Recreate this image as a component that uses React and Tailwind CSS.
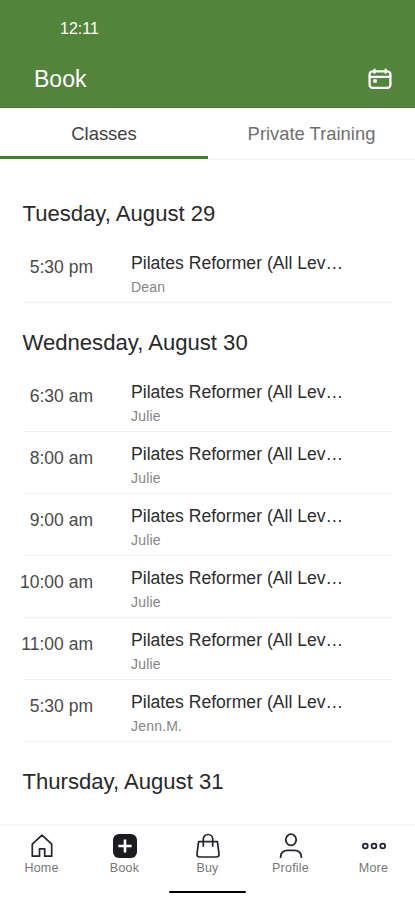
const days = [
  { date: "Tuesday, August 29", classes: [["5:30 pm", "Dean"]] },
  {
    date: "Wednesday, August 30",
    classes: [
      ["6:30 am", "Julie"],
      ["8:00 am", "Julie"],
      ["9:00 am", "Julie"],
      ["10:00 am", "Julie"],
      ["11:00 am", "Julie"],
      ["5:30 pm", "Jenn.M."],
    ],
  },
  { date: "Thursday, August 31", classes: [["", ""]] },
];

function CalendarIcon() {
  return (
    <svg width="26" height="26" viewBox="0 0 26 26" fill="none" stroke="#fff" strokeWidth="2.3" strokeLinecap="round">
      <rect x="2.6" y="5.4" width="20.8" height="16.4" rx="3" />
      <path d="M2.6 10.8h20.8M7.5 3.6v3.2M18.6 3.6v3.2" />
      <rect x="6.2" y="13.2" width="3.6" height="3.6" rx="0.6" fill="#fff" stroke="none" />
    </svg>
  );
}

function HomeIcon() {
  return (
    <svg width="26" height="26" viewBox="0 0 26 26" fill="none" stroke="#25242f" strokeWidth="1.7" strokeLinejoin="round">
      <path d="M3.3 11.2 13 2.2l9.7 9v12h-7v-7.4h-5.2v7.4H3.3z" />
    </svg>
  );
}

function BookIcon() {
  return (
    <svg width="26" height="26" viewBox="0 0 26 26">
      <rect x="1" y="1" width="24" height="24" rx="6" fill="#1c1b20" />
      <path d="M13 6.4v13.2M6.4 13h13.2" stroke="#fff" strokeWidth="2.6" />
    </svg>
  );
}

function BuyIcon() {
  return (
    <svg width="26" height="26" viewBox="0 0 26 26" fill="none" stroke="#25242f" strokeWidth="1.7" strokeLinecap="round" strokeLinejoin="round">
      <path d="M3.6 8.6h18.8l1.6 12.2c.3 2-.8 3.2-2.6 3.2H4.6C2.8 24 1.7 22.8 2 20.8z" />
      <path d="M8.3 13V6.2a4.7 4.7 0 0 1 9.4 0V13" />
    </svg>
  );
}

function ProfileIcon() {
  return (
    <svg width="26" height="26" viewBox="0 0 26 26" fill="none" stroke="#25242f" strokeWidth="1.8" strokeLinecap="round">
      <ellipse cx="13" cy="6.8" rx="5.2" ry="5.6" />
      <path d="M2.6 24.2c.2-4.4 3-6.8 7.2-6.8h6.4c4.2 0 7 2.4 7.2 6.8" />
    </svg>
  );
}

function MoreIcon() {
  return (
    <svg width="26" height="26" viewBox="0 0 26 26" fill="none" stroke="#25242f" strokeWidth="1.8">
      <circle cx="4.3" cy="13" r="2.4" />
      <circle cx="13" cy="13" r="2.4" />
      <circle cx="21.7" cy="13" r="2.4" />
    </svg>
  );
}

const nav = [
  ["Home", HomeIcon],
  ["Book", BookIcon],
  ["Buy", BuyIcon],
  ["Profile", ProfileIcon],
  ["More", MoreIcon],
];

function ClassRow({ time, teacher }) {
  return (
    <div className="flex h-[62px] shrink-0">
      <div className="w-[93px] pt-[14px] text-right text-[17.5px] leading-6 text-[#4a4a4a]">{time}</div>
      <div className="ml-[38px] mr-[23px] flex-1">
        <div className="pt-[10px] text-[17.6px] leading-6 text-[#2d2d2d] whitespace-nowrap">Pilates Reformer (All Lev…</div>
        <div className="pt-px text-[14px] leading-[22px] tracking-[0.2px] text-[#858585]">{teacher}</div>
      </div>
    </div>
  );
}

export default function App() {
  return (
    <div className="flex h-[900px] w-[415px] flex-col overflow-hidden bg-white font-['Liberation_Sans',Arial,sans-serif]">
      <header className="h-[108px] shrink-0 border-b border-[#467a25] bg-[#53843c] text-white">
        <div className="pl-[60px] pt-[19px] text-[16px] leading-5">12:11</div>
        <div className="mt-[25px] flex h-[30px] items-center justify-between pl-[34px] pr-[22px]">
          <h1 className="text-[23px] leading-[30px]">Book</h1>
          <CalendarIcon />
        </div>
      </header>
      <div className="flex h-[52px] shrink-0 text-center text-[18.4px] leading-[52px]">
        <div className="h-[51px] w-[208px] border-b-[3px] border-[#417f2a] text-[#414141]">Classes</div>
        <div className="flex-1 border-b border-[#f3f3f3] text-[#707070]">Private Training</div>
      </div>
      <main className="flex min-h-0 flex-1 flex-col overflow-hidden pt-[14px]">
        {days.map((day) => (
          <section key={day.date} className="group shrink-0">
            <h2 className="h-[67px] pl-[22.5px] pt-[26px] text-[22.1px] leading-[28px] text-[#292929]">{day.date}</h2>
            {day.classes.map(([time, teacher]) => (
              <div key={time}>
                <ClassRow time={time} teacher={teacher} />
                <div className="-mt-px ml-[24px] mr-[23px] h-px bg-[#f2f2f2]" />
              </div>
            ))}
          </section>
        ))}
      </main>
      <nav className="h-[76px] shrink-0 border-t-2 border-[#f8f8f8] bg-white">
        <div className="grid grid-cols-5 pt-[7px]">
          {nav.map(([label, Icon]) => (
            <div key={label} className="flex flex-col items-center">
              <Icon />
              <span className="text-[12.5px] leading-[18px] tracking-[0.2px] text-[#777]">{label}</span>
            </div>
          ))}
        </div>
        <div className="mx-auto mt-[14px] h-[2px] w-[77px] rounded-full bg-black" />
      </nav>
    </div>
  );
}
